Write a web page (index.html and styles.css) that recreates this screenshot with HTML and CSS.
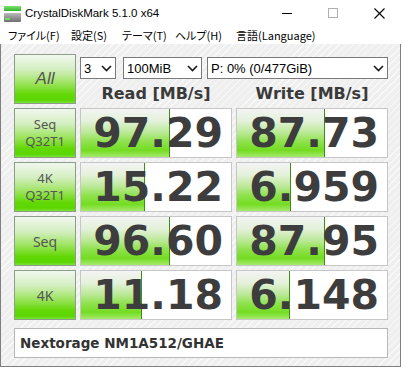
FILE: index.html
```html
<!DOCTYPE html>
<html>
<head>
<meta charset="utf-8">
<link rel="stylesheet" href="styles.css">
</head>
<body>
<div class="window">
  <div class="titlebar">
    <svg class="app-icon" width="17" height="16" viewBox="0 0 17 16">
      <defs>
        <linearGradient id="ig" x1="0" y1="0" x2="0" y2="1">
          <stop offset="0" stop-color="#7fe36f"/>
          <stop offset="1" stop-color="#2fb52a"/>
        </linearGradient>
        <linearGradient id="ib" x1="0" y1="0" x2="0" y2="1">
          <stop offset="0" stop-color="#b9b9b9"/>
          <stop offset="1" stop-color="#6f6f6f"/>
        </linearGradient>
      </defs>
      <rect x="0" y="0" width="17" height="5" fill="url(#ig)"/>
      <rect x="0" y="7" width="17" height="9" rx="1" fill="url(#ib)"/>
      <rect x="1" y="12" width="5" height="2" fill="#6fe05a"/>
    </svg>
    <span class="title">CrystalDiskMark 5.1.0 x64</span>
    <div class="controls">
      <div class="ctl"><svg width="10" height="10" viewBox="0 0 10 10"><rect x="0" y="5" width="10" height="1" fill="#000"/></svg></div>
      <div class="ctl"><svg width="10" height="10" viewBox="0 0 10 10"><rect x="0.5" y="0.5" width="9" height="9" fill="none" stroke="#b0b0b0"/></svg></div>
      <div class="ctl"><svg width="11" height="11" viewBox="0 0 11 11"><path d="M0.5 0.5 L10.5 10.5 M10.5 0.5 L0.5 10.5" stroke="#000" stroke-width="1.1"/></svg></div>
    </div>
  </div>
  <div class="menubar">
    <span class="mi mi1">ファイル(F)</span>
    <span class="mi mi2">設定(S)</span>
    <span class="mi mi3">テーマ(T)</span>
    <span class="mi mi4">ヘルプ(H)</span>
    <span class="mi mi5">言語(Language)</span>
  </div>
  <div class="client">
    <div class="grid">
      <div class="btn all">All</div>
      <div class="head">
        <div class="dds">
          <div class="dd dd-n"><span>3</span><svg class="chev" width="11" height="7" viewBox="0 0 11 7"><path d="M1 1 L5.5 5.5 L10 1" fill="none" stroke="#1a1a1a" stroke-width="1.6"/></svg></div>
          <div class="dd dd-s"><span>100MiB</span><svg class="chev" width="11" height="7" viewBox="0 0 11 7"><path d="M1 1 L5.5 5.5 L10 1" fill="none" stroke="#1a1a1a" stroke-width="1.6"/></svg></div>
          <div class="dd dd-d"><span>P: 0% (0/477GiB)</span><svg class="chev" width="11" height="7" viewBox="0 0 11 7"><path d="M1 1 L5.5 5.5 L10 1" fill="none" stroke="#1a1a1a" stroke-width="1.6"/></svg></div>
        </div>
        <div class="heads">
          <span class="hd">Read [MB/s]</span>
          <span class="hd">Write [MB/s]</span>
        </div>
      </div>

      <div class="btn lbl two"><span class="ln">Seq</span><span class="ln">Q32T1</span></div>
      <div class="cell"><div class="bar" style="width:89px"></div><span class="num">97.29</span></div>
      <div class="cell"><div class="bar" style="width:88px"></div><span class="num">87.73</span></div>

      <div class="btn lbl two"><span class="ln">4K</span><span class="ln">Q32T1</span></div>
      <div class="cell"><div class="bar" style="width:64px"></div><span class="num">15.22</span></div>
      <div class="cell"><div class="bar" style="width:54px"></div><span class="num">6.959</span></div>

      <div class="btn lbl one"><span class="ln">Seq</span></div>
      <div class="cell"><div class="bar" style="width:89px"></div><span class="num">96.60</span></div>
      <div class="cell"><div class="bar" style="width:88px"></div><span class="num">87.95</span></div>

      <div class="btn lbl one"><span class="ln">4K</span></div>
      <div class="cell"><div class="bar" style="width:61px"></div><span class="num">11.18</span></div>
      <div class="cell"><div class="bar" style="width:53px"></div><span class="num">6.148</span></div>
    </div>
    <div class="name">Nextorage NM1A512/GHAE</div>
  </div>
</div>
</body>
</html>
```
FILE: styles.css
```css
* { box-sizing: border-box; }
html, body { margin: 0; padding: 0; }
body {
  width: 402px;
  height: 367px;
  overflow: hidden;
  background: #ffffff;
  font-family: "Liberation Sans", Arial, sans-serif;
}
.window { width: 402px; height: 367px; }

.titlebar {
  height: 26px;
  display: flex;
  align-items: center;
}
.app-icon { margin-left: 4px; margin-top: 1px; }
.title {
  margin-left: 4px;
  font-size: 11.5px;
  color: #000;
}
.controls { margin-left: auto; display: flex; height: 26px; }
.ctl {
  width: 46px;
  height: 26px;
  display: flex;
  align-items: center;
  justify-content: center;
}

.menubar {
  height: 18px;
  display: flex;
  align-items: center;
  padding-left: 8px;
  font-family: "Noto Sans CJK JP", sans-serif;
  font-feature-settings: "palt" 1;
  font-size: 11px;
  color: #000;
}
.mi { line-height: 18px; white-space: nowrap; flex: none; }
.mi1 { width: 63px; }
.mi2 { width: 51px; }
.mi3 { width: 53px; }
.mi4 { width: 61px; }

.client {
  width: 401px;
  height: 323px;
  border: 1px solid #7f7f7f;
  border-top: none;
  background-color: #efefef;
  background-image: repeating-linear-gradient(135deg, #efefef 0px, #efefef 4px, #f9f9f9 4px, #f9f9f9 5px);
  padding: 10px 0 0 13px;
}

.grid {
  display: grid;
  grid-template-columns: 62px 152px 152px;
  grid-template-rows: repeat(5, 50px);
  column-gap: 4px;
  row-gap: 4px;
}

.btn {
  border: 1px solid #8c9e8a;
  background: linear-gradient(to bottom, #f1f7ef 0%, #d4efc1 30%, #9fe462 58%, #63d806 82%, #5bd600 94%, #7ee03a 100%);
  color: #555;
  display: flex;
  flex-direction: column;
  align-items: center;
  justify-content: center;
}
.all {
  font-style: italic;
  font-size: 17px;
}
.lbl { font-family: "Noto Sans", sans-serif; font-size: 13px; }
.lbl .ln { display: block; line-height: 17px; height: 17px; }
.lbl.one { font-size: 14px; }

.head {
  grid-column: 2 / span 2;
  display: flex;
  flex-direction: column;
}
.dds {
  display: flex;
  margin-top: 3px;
}
.dd {
  height: 22px;
  border: 1px solid #7a7a7a;
  background: #fff;
  display: flex;
  align-items: center;
  justify-content: space-between;
  padding: 0 3px 0 3px;
  font-size: 13px;
  color: #000;
}
.dd-n { width: 36px; }
.dd-s { width: 79px; margin-left: 7px; }
.dd-d { width: 181px; margin-left: 5px; }
.chev { margin-top: 1px; }

.heads {
  display: grid;
  grid-template-columns: 152px 152px;
  column-gap: 4px;
  margin-top: 5px;
}
.hd {
  text-align: center;
  font-family: "DejaVu Sans", sans-serif;
  font-weight: bold;
  font-size: 16px;
  line-height: 20px;
  color: #3a3a3a;
}

.cell {
  position: relative;
  background: #fff;
  border: 1px solid #c6c6c6;
  display: flex;
  align-items: center;
  justify-content: flex-end;
  padding-right: 8px;
  overflow: hidden;
}
.bar {
  position: absolute;
  left: 0;
  top: 0;
  bottom: 0;
  background: linear-gradient(to bottom, #f4f4f4 0%, #e4f1da 25%, #bde99a 48%, #8ee24c 68%, #74dc22 86%, #a6ea6c 100%);
  border-right: 1px solid #3f8d16;
}
.num {
  position: relative;
  font-family: "DejaVu Sans", sans-serif;
  font-weight: bold;
  font-size: 41px;
  line-height: 48px;
  color: #3d3d3d;
}

.name {
  margin-top: 8px;
  width: 374px;
  height: 30px;
  border: 1px solid #b8b8b8;
  background: #fff;
  display: flex;
  align-items: center;
  padding-left: 5px;
  font-family: "DejaVu Sans", sans-serif;
  font-weight: bold;
  font-size: 13.5px;
  color: #333;
}
```
